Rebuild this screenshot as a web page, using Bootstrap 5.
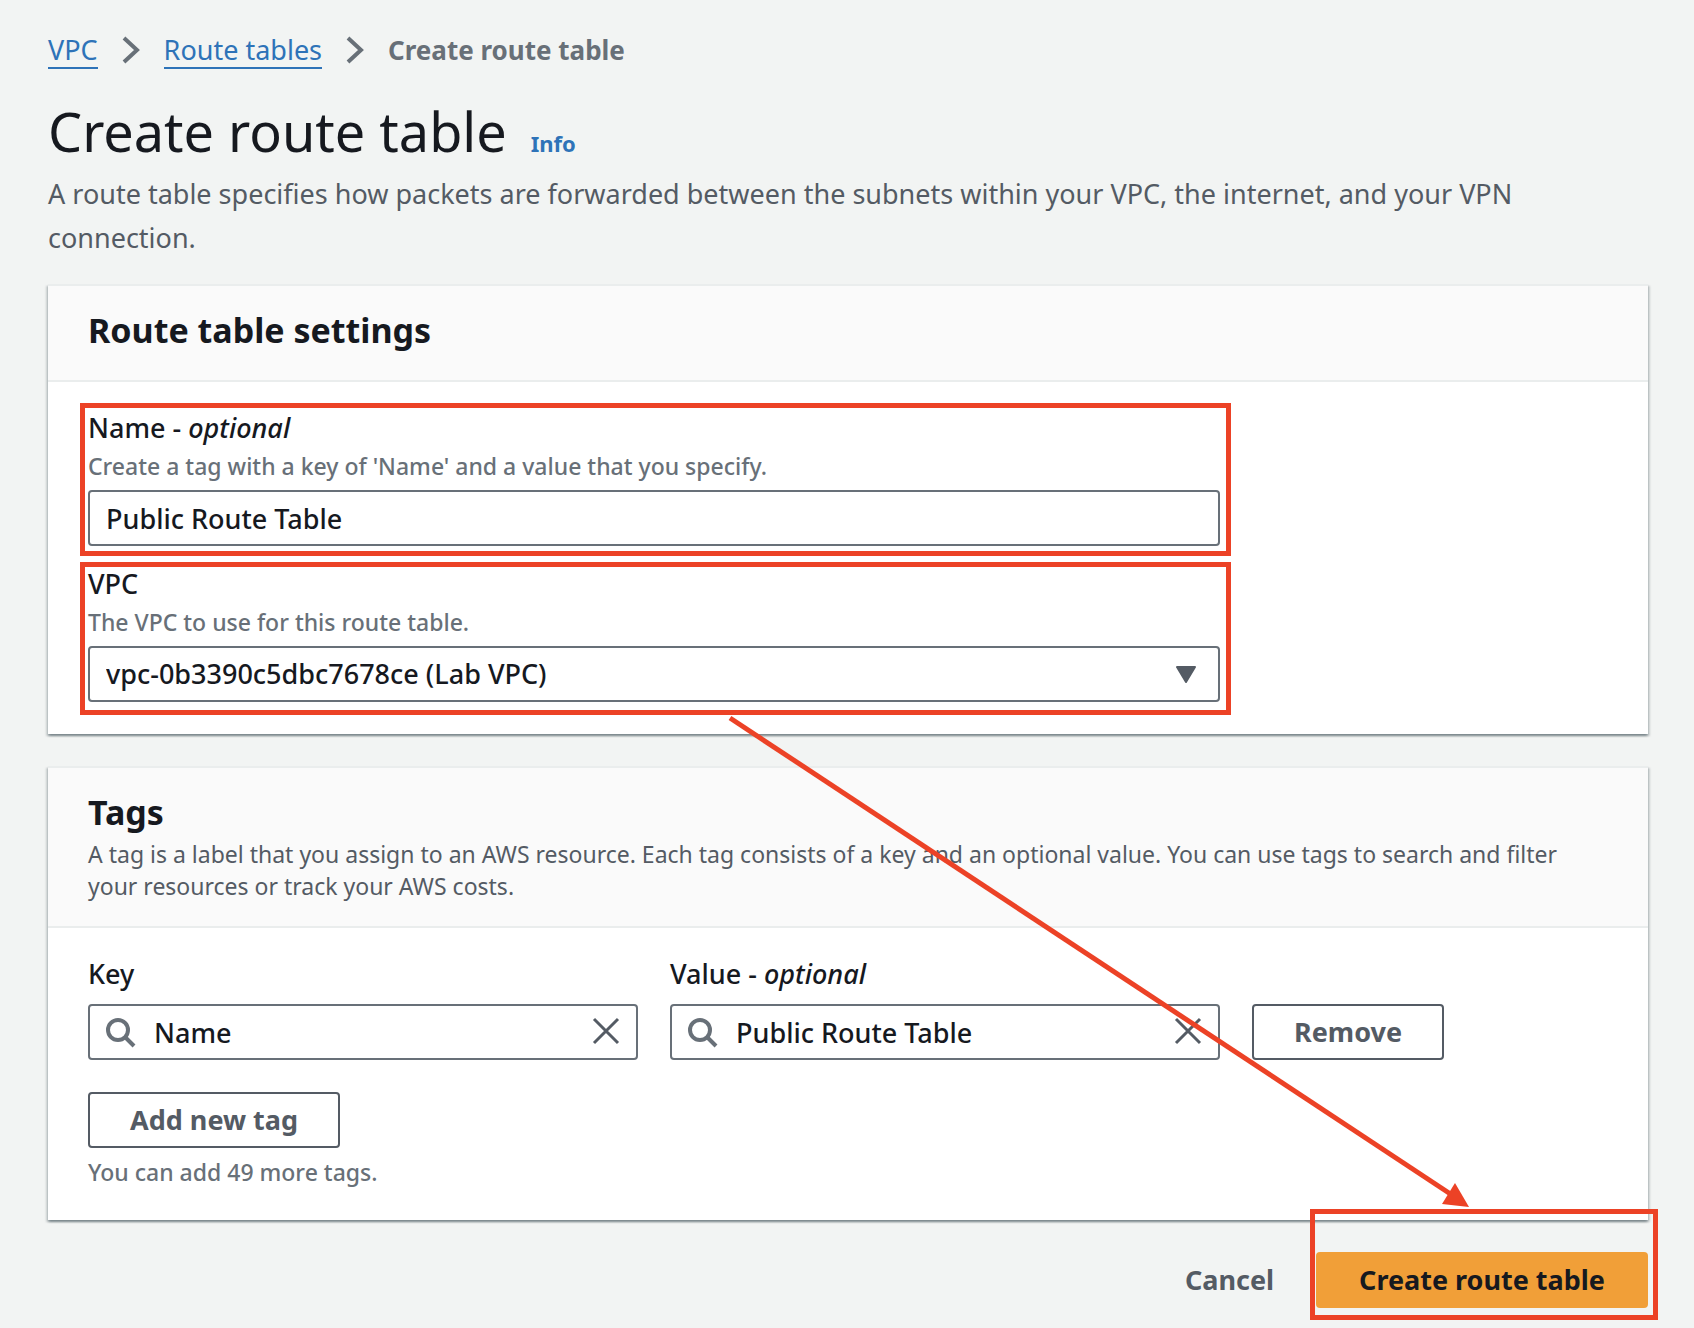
<!DOCTYPE html>
<html lang="en">
<head>
<meta charset="utf-8">
<meta name="viewport" content="width=device-width, initial-scale=1">
<title>Create route table</title>
<link href="https://cdn.jsdelivr.net/npm/bootstrap@5.3.0/dist/css/bootstrap.min.css" rel="stylesheet">
<style>
  body { background: #f2f4f3; color: #16191f; font-family: "Noto Sans", "Open Sans", sans-serif; font-size: 27px; line-height: 36px; font-weight: 500; }
  .page { padding: 28px 46px 20px 48px; }
  .crumbs { line-height: 44px; gap: 24px; color: #687078; }
  .crumbs li { display: flex; align-items: center; gap: 24px; height: 44px; }
  .crumbs a { color: #2e73b8; text-decoration: none; display: block; line-height: 34px; border-bottom: 2px solid; margin-top: 2px; font-weight: 400; }
  .crumbs .current { font-size: 26px; font-weight: 700; }
  h1 { font-size: 54px; line-height: 70px; font-weight: 400; }
  .info-link { font-size: 22px; font-weight: 700; color: #2e73b8; text-decoration: none; }
  .intro { line-height: 44px; color: #545b64; margin-top: 6px; font-weight: 400; }
  .panel { border: 0; border-top: 2px solid #eaeded; border-radius: 0;
    box-shadow: 0 2px 2px rgba(0,28,36,.3), 2px 2px 2px rgba(0,28,36,.15), -2px 2px 2px rgba(0,28,36,.15); }
  .panel + .panel { margin-top: 32px; }
  .panel .card-header { background: #fafafa; border-bottom: 2px solid #eaeded; padding: 22px 40px 24px; border-radius: 0; }
  .panel .card-body { padding: 28px 40px 32px; }
  h2 { font-size: 34px; line-height: 44px; font-weight: 700; margin-bottom: 4px; }
  .hint { font-size: 23px; line-height: 32px; color: #687078; }
  .intro-small { font-size: 23px; line-height: 32px; color: #545b64; font-weight: 400; }
  .grid-gap { --bs-gutter-x: 32px; }
  .field { margin-bottom: 20px; }
  .form-control, .form-select { height: 56px; padding: 0 16px; border: 2px solid #687078; border-radius: 4px; font-size: 27px; font-weight: 500; color: #16191f; background: #fff; }
  .search-box .form-control { padding: 0 64px; }
  .search-box .glass { position: absolute; left: 17px; top: 13px; pointer-events: none; }
  .clear-btn { position: absolute; right: 18px; top: 13px; width: 28px; height: 28px; line-height: 0; }
  .select-arrow { position: absolute; right: 24px; top: 19px; pointer-events: none; }
  .tag-label { margin-bottom: 12px; }
  .add-tag, .actions { margin-top: 32px; }
  .act { height: 56px; padding: 0 40px; border: 2px solid transparent; border-radius: 4px; font-size: 27px; font-weight: 700; line-height: 36px; color: #545b64; }
  .act-outline { border-color: #545b64; background: #fff; }
  .act-main { background: #f19f38; color: #16191f; padding: 0 41px; }
  .callout-box { position: absolute; border: 5px solid #ec4226; pointer-events: none; z-index: 2; }
  .on-name { inset: -7px -11px -10px -8px; }
  .on-vpc { inset: -4px -11px -13px -8px; }
  .on-action { inset: -43px -10px -12px -6px; }
  .callout-arrow { position: absolute; left: 0; top: 0; pointer-events: none; z-index: 3; }
</style>
</head>
<body>
<main class="page position-relative">
  <nav aria-label="Breadcrumb">
    <ol class="crumbs list-unstyled d-flex mb-0">
      <li><a href="#">VPC</a>
        <svg width="18" height="28" viewBox="0 0 18 28" fill="none" stroke="#687078" stroke-width="4" aria-hidden="true"><path d="M2 2 L15 14 L2 26"/></svg></li>
      <li><a href="#">Route tables</a>
        <svg width="18" height="28" viewBox="0 0 18 28" fill="none" stroke="#687078" stroke-width="4" aria-hidden="true"><path d="M2 2 L15 14 L2 26"/></svg></li>
      <li class="current" aria-current="page">Create route table</li>
    </ol>
  </nav>

  <div class="d-flex align-items-baseline gap-4 mt-4">
    <h1 class="mb-0">Create route table</h1>
    <a href="#" class="info-link">Info</a>
  </div>
  <p class="intro mb-4">A route table specifies how packets are forwarded between the subnets within your VPC, the internet, and your VPN connection.</p>

  <form>
    <section class="card panel">
      <div class="card-header"><h2>Route table settings</h2></div>
      <div class="card-body">
        <div class="row grid-gap">
          <div class="col-9">
            <div class="field position-relative">
              <label for="rtName" class="d-block">Name - <em>optional</em></label>
              <div class="hint mt-1 mb-2" id="rtNameHint">Create a tag with a key of 'Name' and a value that you specify.</div>
              <input id="rtName" type="text" class="form-control" value="Public Route Table" aria-describedby="rtNameHint">
              <div class="callout-box on-name"></div>
            </div>
            <div class="position-relative">
              <label for="rtVpc" class="d-block">VPC</label>
              <div class="hint mt-1 mb-2" id="rtVpcHint">The VPC to use for this route table.</div>
              <div class="position-relative">
                <select id="rtVpc" class="form-select" aria-describedby="rtVpcHint"><option>vpc-0b3390c5dbc7678ce (Lab VPC)</option></select>
                <svg class="select-arrow" width="20" height="19" viewBox="0 0 20 19" aria-hidden="true"><path d="M1 2 H19 L10 17 Z" fill="#545b64" stroke="#545b64" stroke-width="2" stroke-linejoin="round"/></svg>
              </div>
              <div class="callout-box on-vpc"></div>
            </div>
          </div>
        </div>
      </div>
    </section>

    <section class="card panel">
      <div class="card-header">
        <h2>Tags</h2>
        <p class="intro-small mb-0">A tag is a label that you assign to an AWS resource. Each tag consists of a key and an optional value. You can use tags to search and filter your resources or track your AWS costs.</p>
      </div>
      <div class="card-body">
        <div class="row grid-gap align-items-end">
          <div class="col-9">
            <div class="row grid-gap">
              <div class="col-6">
                <label for="tagKey" class="d-block tag-label">Key</label>
                <div class="search-box position-relative">
                  <svg class="glass" width="32" height="32" viewBox="0 0 32 32" fill="none" stroke="#687078" stroke-width="4" aria-hidden="true"><circle cx="13" cy="13" r="10"/><path d="M20 20 L29 29"/></svg>
                  <input id="tagKey" type="text" class="form-control" value="Name">
                  <button type="button" class="clear-btn btn p-0 border-0" aria-label="Clear key"><svg width="28" height="28" viewBox="0 0 28 28" fill="none" stroke="#545b64" stroke-width="3"><path d="M2 2 L26 26 M26 2 L2 26"/></svg></button>
                </div>
              </div>
              <div class="col-6">
                <label for="tagValue" class="d-block tag-label">Value - <em>optional</em></label>
                <div class="search-box position-relative">
                  <svg class="glass" width="32" height="32" viewBox="0 0 32 32" fill="none" stroke="#687078" stroke-width="4" aria-hidden="true"><circle cx="13" cy="13" r="10"/><path d="M20 20 L29 29"/></svg>
                  <input id="tagValue" type="text" class="form-control" value="Public Route Table">
                  <button type="button" class="clear-btn btn p-0 border-0" aria-label="Clear value"><svg width="28" height="28" viewBox="0 0 28 28" fill="none" stroke="#545b64" stroke-width="3"><path d="M2 2 L26 26 M26 2 L2 26"/></svg></button>
                </div>
              </div>
            </div>
          </div>
          <div class="col-3"><button type="button" class="btn act act-outline">Remove</button></div>
        </div>
        <button type="button" class="btn act act-outline add-tag">Add new tag</button>
        <div class="hint mt-2">You can add 49 more tags.</div>
      </div>
    </section>

    <div class="actions d-flex justify-content-end">
      <button type="button" class="btn act">Cancel</button>
      <div class="position-relative">
        <button type="submit" class="btn act act-main">Create route table</button>
        <div class="callout-box on-action"></div>
      </div>
    </div>
  </form>

  <svg class="callout-arrow" width="1480" height="1220" viewBox="0 0 1480 1220" aria-hidden="true">
    <path d="M730 718 L1452 1195" stroke="#ec4226" stroke-width="5" fill="none"/>
    <path d="M1469 1207 L1455 1183 L1442 1204 Z" fill="#ec4226"/>
  </svg>
</main>
<script src="https://cdn.jsdelivr.net/npm/bootstrap@5.3.0/dist/js/bootstrap.bundle.min.js"></script>
</body>
</html>
